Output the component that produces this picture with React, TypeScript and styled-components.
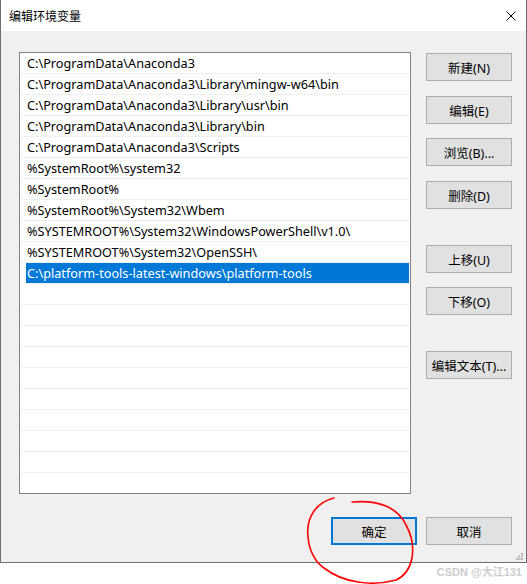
import React from "react";
import styled, { createGlobalStyle } from "styled-components";

const Global = createGlobalStyle`
  html, body { margin: 0; padding: 0; background: #ffffff; }
  body { width: 527px; height: 584px; overflow: hidden; position: relative;
    font-family: "Noto Sans", "Noto Sans CJK SC", sans-serif; }
`;

const Window = styled.div`
  width: 527px;
  box-sizing: border-box;
  border: 1px solid #6e6e6e;
  border-top: none;
  display: flex;
  flex-direction: column;
  position: relative;
`;

const TitleBar = styled.div`
  height: 31px;
  background: #ffffff;
  display: flex;
  align-items: center;
  justify-content: space-between;
  padding: 0 10px 0 8px;
  font-family: "Noto Sans CJK SC", sans-serif;
  font-size: 12px;
  color: #000;
`;

const Body = styled.div`
  background: #f0f0f0;
  padding: 21px 14px 17px 18px;
  display: flex;
  flex-direction: column;
`;

const Main = styled.div`
  display: flex;
  gap: 15px;
`;

const List = styled.div`
  width: 392px;
  height: 442px;
  box-sizing: border-box;
  border: 1px solid #828282;
  background: #fff;
  overflow: hidden;
  display: flex;
  flex-direction: column;
`;

const Row = styled.div<{ $selected?: boolean }>`
  height: 20px;
  flex: none;
  border-bottom: 1px solid #efefef;
  display: flex;
  align-items: center;
  font-family: "Noto Sans", "Noto Sans CJK SC", sans-serif;
  font-size: 12.7px;
  color: ${(p) => (p.$selected ? "#fff" : "#000")};
  background: ${(p) => (p.$selected ? "#0078d7" : "transparent")};
  margin-left: ${(p) => (p.$selected ? "6px" : "1px")};
  padding-left: ${(p) => (p.$selected ? "1px" : "6px")};
  margin-right: 1px;
  white-space: nowrap;
`;

const Side = styled.div`
  width: 86px;
  display: flex;
  flex-direction: column;
  padding-top: 1px;
`;

const Button = styled.button<{ $top?: number; $primary?: boolean }>`
  width: 86px;
  height: 28px;
  margin: ${(p) => p.$top ?? 0}px 0 0 0;
  box-sizing: border-box;
  background: #e1e1e1;
  border: ${(p) => (p.$primary ? "2px solid #0078d7" : "1px solid #adadad")};
  font-family: "Noto Sans", "Noto Sans CJK SC", sans-serif;
  font-size: 12.5px;
  color: #000;
  padding: 0;
  display: flex;
  align-items: center;
  justify-content: center;
`;

const Footer = styled.div`
  display: flex;
  justify-content: flex-end;
  gap: 9px;
  margin-top: 23px;
  position: relative;
`;

const Grip = styled.svg`
  position: absolute;
  right: -11px;
  bottom: -15px;
`;

const Watermark = styled.div`
  position: absolute;
  right: 5px;
  top: 565px;
  line-height: 14px;
  white-space: nowrap;
  font-family: "Liberation Sans", "Noto Sans CJK SC", sans-serif;
  font-weight: bold;
  font-size: 11px;
  color: #cdcdcd;
`;

const Annotation = styled.svg`
  position: absolute;
  left: 0;
  top: 0;
  pointer-events: none;
`;

const items = [
  "C:\\ProgramData\\Anaconda3",
  "C:\\ProgramData\\Anaconda3\\Library\\mingw-w64\\bin",
  "C:\\ProgramData\\Anaconda3\\Library\\usr\\bin",
  "C:\\ProgramData\\Anaconda3\\Library\\bin",
  "C:\\ProgramData\\Anaconda3\\Scripts",
  "%SystemRoot%\\system32",
  "%SystemRoot%",
  "%SystemRoot%\\System32\\Wbem",
  "%SYSTEMROOT%\\System32\\WindowsPowerShell\\v1.0\\",
  "%SYSTEMROOT%\\System32\\OpenSSH\\",
  "C:\\platform-tools-latest-windows\\platform-tools",
];

export default function App() {
  const rows = [...items];
  while (rows.length < 21) rows.push("");
  return (
    <>
      <Global />
      <Window>
        <TitleBar>
          <span>编辑环境变量</span>
          <svg width="10" height="10" viewBox="0 0 10 10">
            <path d="M0.5 0.5 L9.5 9.5 M9.5 0.5 L0.5 9.5" stroke="#000" strokeWidth="1" />
          </svg>
        </TitleBar>
        <Body>
          <Main>
            <List>
              {rows.map((t, i) => (
                <Row key={i} $selected={i === 10}>
                  {t}
                </Row>
              ))}
            </List>
            <Side>
              <Button>新建(N)</Button>
              <Button $top={15}>编辑(E)</Button>
              <Button $top={14}>浏览(B)...</Button>
              <Button $top={15}>删除(D)</Button>
              <Button $top={36}>上移(U)</Button>
              <Button $top={14}>下移(O)</Button>
              <Button $top={36}>编辑文本(T)...</Button>
            </Side>
          </Main>
          <Footer>
            <Button $primary>确定</Button>
            <Button>取消</Button>
            <Grip width="7" height="7" viewBox="0 0 7 7">
              <rect x="5" y="0" width="2" height="2" fill="#b8b8b8" />
              <rect x="2" y="2.5" width="2" height="2" fill="#b8b8b8" />
              <rect x="5" y="2.5" width="2" height="2" fill="#b8b8b8" />
              <rect x="0" y="5" width="2" height="2" fill="#b8b8b8" />
              <rect x="2.5" y="5" width="2" height="2" fill="#b8b8b8" />
              <rect x="5" y="5" width="2" height="2" fill="#b8b8b8" />
            </Grip>
          </Footer>
        </Body>
      </Window>
      <Watermark>CSDN @大江131</Watermark>
      <Annotation width="527" height="584" viewBox="0 0 527 584">
        <path
          d="M334 498 C326 500 319 504 314 511 C309 518 307 528 308 537 C309 550 315 562 324 568 C333 575 345 580 358 582 C370 584 385 583 396 580 C405 576 410 568 412 558 C414 546 411 534 406 525 C402 516 395 510 386 506 C376 502 364 501 352 502"
          fill="none"
          stroke="#ff0000"
          strokeWidth="1.6"
          strokeLinecap="round"
        />
      </Annotation>
    </>
  );
}
